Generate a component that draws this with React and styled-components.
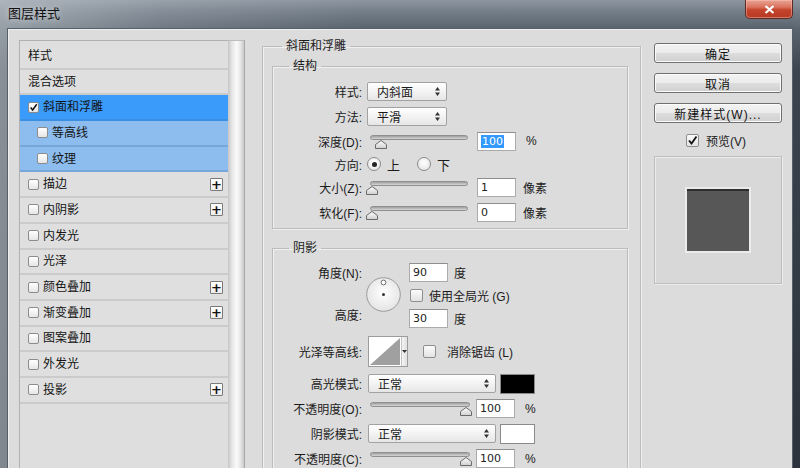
import React from 'react'
import styled, { createGlobalStyle } from 'styled-components'

const GlobalStyle = createGlobalStyle`
	html, body {
		margin: 0;
		padding: 0;
		background: #2a3039;
	}
	body {
		font-family: 'Liberation Sans', 'Noto Sans CJK SC', sans-serif;
		font-size: 12px;
		color: #1b1b1b;
	}
	* {
		box-sizing: border-box;
	}
`

const layers = [
	{ label: '样式', header: true },
	{ label: '混合选项', header: true },
	{ label: '斜面和浮雕', checked: true, state: 'sel' },
	{ label: '等高线', sub: true, state: 'sub' },
	{ label: '纹理', sub: true, state: 'sub' },
	{ label: '描边', plus: true },
	{ label: '内阴影', plus: true },
	{ label: '内发光' },
	{ label: '光泽' },
	{ label: '颜色叠加', plus: true },
	{ label: '渐变叠加', plus: true },
	{ label: '图案叠加' },
	{ label: '外发光' },
	{ label: '投影', plus: true },
]

const Arrows = () => (
	<svg width='5' height='9' viewBox='0 0 5 9'>
		<path d='M2.5 0 L5 3.5 L0 3.5 Z M2.5 9 L5 5.5 L0 5.5 Z' fill='#333' />
	</svg>
)

const Tick = () => (
	<svg width='11' height='11' viewBox='0 0 11 11'>
		<path d='M2 5.5 L4.5 8.5 L9.5 1.5' fill='none' stroke='#111' strokeWidth='1.8' />
	</svg>
)

const Slider = ({ width, value }) => (
	<SliderWrap $w={width}>
		<Track />
		<Thumb viewBox='0 0 12 9' style={{ left: value * (width - 6) - 4 }}>
			<defs>
				<linearGradient id='tg' x1='0' y1='0' x2='0' y2='1'>
					<stop offset='0' stopColor='#ffffff' />
					<stop offset='1' stopColor='#cfcfcf' />
				</linearGradient>
			</defs>
			<path d='M0.5 8.5 L0.5 4.5 L6 0.5 L11.5 4.5 L11.5 8.5 Z' fill='url(#tg)' stroke='#6a6a6a' />
		</Thumb>
	</SliderWrap>
)

const Dial = () => (
	<DialSvg width='35' height='35' viewBox='0 0 35 35'>
		<defs>
			<radialGradient id='dg' cx='0.5' cy='0.45' r='0.6'>
				<stop offset='0' stopColor='#ffffff' />
				<stop offset='1' stopColor='#e2e2e2' />
			</radialGradient>
		</defs>
		<circle cx='17.5' cy='17.5' r='16.8' fill='url(#dg)' stroke='#9a9a9a' />
		<circle cx='17.5' cy='5.5' r='2.4' fill='#fff' stroke='#6e6e6e' />
		<circle cx='17.5' cy='17.5' r='1.5' fill='#333' />
	</DialSvg>
)

const App = () => {
	return (
		<Frame>
			<GlobalStyle />
			<TitleBar>
				<Title>图层样式</Title>
				<CloseBtn>
					<svg width='11' height='9' viewBox='0 0 11 9'>
						<path d='M1.5 1 L9.5 8 M9.5 1 L1.5 8' stroke='#fff' strokeWidth='2.2' />
					</svg>
				</CloseBtn>
			</TitleBar>
			<Body>
				<Sidebar>
					<List>
						{layers.map((l) => (
							<Row key={l.label} $state={l.state} $sub={l.sub}>
								{!l.header && <Check>{l.checked && <Tick />}</Check>}
								<RowText>{l.label}</RowText>
								{l.plus && <Plus>+</Plus>}
							</Row>
						))}
					</List>
					<Scroll />
				</Sidebar>

				<Main>
					<Group>
						<Legend $ml={19}>斜面和浮雕</Legend>
						<Inner>
							<Group $mt={7}>
								<Legend $ml={16}>结构</Legend>
								<Section $pt={6} $pb={3}>
									<FormRow $h={25}>
										<Label>样式:</Label>
										<Select $w={80}>
											<span>内斜面</span>
											<Arrows />
										</Select>
									</FormRow>
									<FormRow $h={25}>
										<Label>方法:</Label>
										<Select $w={80}>
											<span>平滑</span>
											<Arrows />
										</Select>
									</FormRow>
									<FormRow $h={24}>
										<Label>深度(D):</Label>
										<Slider width={98} value={0.1} />
										<NumInput>
											<Selected>100</Selected>
										</NumInput>
										<Unit $ml={5}>%</Unit>
									</FormRow>
									<FormRow $h={22}>
										<Label>方向:</Label>
										<Radio $on $ml={0} />
										<RadioText>上</RadioText>
										<Radio $ml={12} />
										<RadioText>下</RadioText>
									</FormRow>
									<FormRow $h={24}>
										<Label>大小(Z):</Label>
										<Slider width={98} value={0} />
										<NumInput>1</NumInput>
										<Unit $ml={2}>像素</Unit>
									</FormRow>
									<FormRow $h={26}>
										<Label>软化(F):</Label>
										<Slider width={98} value={0} />
										<NumInput>0</NumInput>
										<Unit $ml={2}>像素</Unit>
									</FormRow>
								</Section>
							</Group>

							<Group $mt={13}>
								<Legend $ml={16}>阴影</Legend>
								<Section $pt={7} $pb={0}>
									<AngleBlock>
										<AngleLabels>
											<Label $h={20}>角度(N):</Label>
											<Label $h={20}>高度:</Label>
										</AngleLabels>
										<Dial />
										<AngleFields>
											<FieldLine>
												<NumInput>90</NumInput>
												<Unit $ml={6}>度</Unit>
											</FieldLine>
											<FieldLine $h={26}>
												<Box $ml={1} />
												<BoxText>使用全局光 (G)</BoxText>
											</FieldLine>
											<FieldLine>
												<NumInput>30</NumInput>
												<Unit $ml={6}>度</Unit>
											</FieldLine>
										</AngleFields>
									</AngleBlock>

									<FormRow $h={31} $mt={8}>
										<Label>光泽等高线:</Label>
										<Contour>
											<ContourArt viewBox='0 0 33 29' preserveAspectRatio='none'>
												<path d='M1 28 L32 1 L32 28 Z' fill='#a0a0a0' />
											</ContourArt>
											<ContourDrop>
												<svg width='5' height='3' viewBox='0 0 5 3'>
													<path d='M0 0 L5 0 L2.5 3 Z' fill='#333' />
												</svg>
											</ContourDrop>
										</Contour>
										<Box $ml={10} />
										<BoxText>消除锯齿 (L)</BoxText>
									</FormRow>

									<FormRow $h={25} $mt={4}>
										<Label>高光模式:</Label>
										<Select $w={128} $ml={1}>
											<span>正常</span>
											<Arrows />
										</Select>
										<Swatch $c='#000' />
									</FormRow>
									<FormRow $h={25}>
										<Label>不透明度(O):</Label>
										<Slider width={100} value={1} />
										<NumInput $ml={-3}>100</NumInput>
										<Unit $ml={5}>%</Unit>
									</FormRow>
									<FormRow $h={25}>
										<Label>阴影模式:</Label>
										<Select $w={128} $ml={1}>
											<span>正常</span>
											<Arrows />
										</Select>
										<Swatch $c='#fff' />
									</FormRow>
									<FormRow $h={25}>
										<Label>不透明度(C):</Label>
										<Slider width={100} value={1} />
										<NumInput $ml={-3}>100</NumInput>
										<Unit $ml={5}>%</Unit>
									</FormRow>
								</Section>
							</Group>
						</Inner>
					</Group>
				</Main>

				<Side>
					<Btn>确定</Btn>
					<Btn>取消</Btn>
					<Btn>新建样式(W)...</Btn>
					<PreviewCheck>
						<Box>
							<Tick />
						</Box>
						<span>预览(V)</span>
					</PreviewCheck>
					<Preview>
						<Square />
					</Preview>
				</Side>
			</Body>
		</Frame>
	)
}

const Frame = styled.div`
	width: 800px;
	height: 468px;
	overflow: hidden;
	display: flex;
	flex-direction: column;
	padding: 0 7px;
	background:
		linear-gradient(to right, rgba(200, 206, 212, 0.55) 0, rgba(200, 206, 212, 0.2) 20%, rgba(200, 206, 212, 0) 45%),
		linear-gradient(to bottom, #8d96a0 0, #737d88 12px, #5b6570 28px, #3b444f 70px, #2b323b 100%);
`

const TitleBar = styled.div`
	height: 28px;
	flex: none;
	display: flex;
	align-items: flex-start;
`

const Title = styled.div`
	padding: 6px 0 0 1px;
	font-size: 13px;
	line-height: 16px;
	color: #101010;
	text-shadow: 0 0 6px rgba(255, 255, 255, 0.7);
`

const CloseBtn = styled.div`
	margin-left: auto;
	width: 48px;
	height: 19px;
	display: flex;
	align-items: center;
	justify-content: center;
	border: 1px solid #5d2a22;
	border-top: none;
	border-radius: 0 0 5px 5px;
	background: linear-gradient(#eaa595 0, #d9715d 40%, #c4432b 55%, #b73a24 100%);
	box-shadow: inset 0 0 0 1px rgba(255, 200, 190, 0.45);
`

const Body = styled.div`
	flex: 1;
	min-height: 0;
	display: flex;
	align-items: stretch;
	background: #dcdcdc;
	border: 1px solid #55606b;
	border-bottom: none;
	box-shadow: inset 1px 1px 0 #eeeeee;
	padding: 11px 10px 0 11px;
`

const Sidebar = styled.div`
	flex: none;
	display: flex;
`

const List = styled.div`
	width: 209px;
	padding-top: 3px;
	background: #dedede;
	border-top: 1px solid #b0b0b0;
	border-left: 1px solid #b0b0b0;
`

const Row = styled.div`
	height: 25.7px;
	display: flex;
	align-items: center;
	gap: 4px;
	padding: 0 5px 0 ${(p) => (p.$sub ? 17 : 8)}px;
	background: ${(p) => (p.$state === 'sel' ? '#3a9bfa' : p.$state === 'sub' ? '#8dbdee' : '#dfdfdf')};
	border-bottom: 2px solid ${(p) => (p.$state ? 'rgba(60, 110, 170, 0.28)' : '#cbcbcb')};
`

const RowText = styled.span`
	flex: 1;
	font-size: 12px;
	line-height: 14px;
	color: #141414;
`

const Check = styled.span`
	width: 11px;
	height: 11px;
	flex: none;
	display: flex;
	align-items: center;
	justify-content: center;
	border: 1px solid #8c8c8c;
	border-radius: 2px;
	background: linear-gradient(#ffffff, #e6e6e6);
`

const Plus = styled.span`
	width: 13px;
	height: 13px;
	flex: none;
	display: flex;
	align-items: center;
	justify-content: center;
	border: 1px solid #7a7a7a;
	border-radius: 1px;
	background: linear-gradient(#ffffff, #ececec);
	font-family: 'DejaVu Sans', sans-serif;
	font-weight: bold;
	font-size: 13px;
	line-height: 1;
	color: #111;
`

const Scroll = styled.div`
	width: 17px;
	border-top: 1px solid #bdbdbd;
	border-right: 1px solid #a8a8a8;
	background: linear-gradient(to right, #c6c6c6 0, #e6e6e6 25%, #fafafa 55%, #e4e4e4 80%, #c9c9c9 100%);
`

const Main = styled.div`
	width: 379px;
	flex: none;
	margin-left: 17px;
`

const Group = styled.fieldset`
	margin: ${(p) => p.$mt || 0}px 0 0;
	padding: 0;
	min-width: 0;
	border: 1px solid #bcbcbc;
	box-shadow: inset 1px 1px 0 #f0f0f0, 1px 1px 0 #f0f0f0;
`

const Legend = styled.legend`
	margin-left: ${(p) => p.$ml}px;
	padding: 0 4px;
	font-size: 12px;
	line-height: 13px;
	color: #1b1b1b;
`

const Inner = styled.div`
	padding: 0 12px 40px 9px;
`

const Section = styled.div`
	padding: ${(p) => p.$pt}px 0 ${(p) => p.$pb}px 5px;
`

const FormRow = styled.div`
	height: ${(p) => p.$h}px;
	margin-top: ${(p) => p.$mt || 0}px;
	display: flex;
	align-items: center;
	gap: 5px;
`

const Label = styled.div`
	width: 84px;
	height: ${(p) => (p.$h ? `${p.$h}px` : 'auto')};
	flex: none;
	display: flex;
	align-items: center;
	justify-content: flex-end;
	white-space: nowrap;
	font-size: 12px;
`

const Select = styled.div`
	width: ${(p) => p.$w}px;
	height: 19px;
	margin-left: ${(p) => p.$ml || 0}px;
	flex: none;
	display: flex;
	align-items: center;
	justify-content: space-between;
	padding: 0 6px 0 9px;
	border: 1px solid #a2a2a2;
	border-radius: 2px;
	background: linear-gradient(#ffffff 0, #f3f3f3 50%, #e6e6e6 100%);
`

const SliderWrap = styled.div`
	position: relative;
	width: ${(p) => p.$w}px;
	height: 19px;
	flex: none;
	margin: 0 4px 0 3px;
`

const Track = styled.div`
	position: absolute;
	left: 0;
	right: 0;
	top: 3px;
	height: 5px;
	border: 1px solid #8f8f8f;
	border-radius: 3px;
	background: linear-gradient(#9e9e9e, #d6d6d6);
`

const Thumb = styled.svg`
	position: absolute;
	top: 8px;
	width: 12px;
	height: 9px;
`

const NumInput = styled.div`
	width: 39px;
	height: 19px;
	flex: none;
	margin-left: ${(p) => p.$ml || 0}px;
	display: flex;
	align-items: center;
	padding: 0 3px;
	background: #fff;
	border: 1px solid #ababab;
	border-top-color: #8e8e8e;
	font-family: 'DejaVu Sans', sans-serif;
	font-size: 11px;
	color: #222;
`

const Selected = styled.span`
	background: #3399ff;
	color: #fff;
	line-height: 13px;
	padding: 0 1px;
`

const Unit = styled.span`
	margin-left: ${(p) => p.$ml || 0}px;
	font-size: 12px;
`

const Radio = styled.span`
	width: 14px;
	height: 14px;
	flex: none;
	margin-left: ${(p) => p.$ml}px;
	border-radius: 50%;
	border: 1px solid #8a8a8a;
	background: radial-gradient(circle at 50% 40%, #ffffff, #e0e0e0);
	display: flex;
	align-items: center;
	justify-content: center;

	&::after {
		content: '';
		width: 5px;
		height: 5px;
		border-radius: 50%;
		background: ${(p) => (p.$on ? '#222' : 'transparent')};
	}
`

const RadioText = styled.span`
	font-size: 13px;
	margin-left: 1px;
`

const AngleBlock = styled.div`
	display: flex;
	height: 66px;
`

const AngleLabels = styled.div`
	width: 84px;
	display: flex;
	flex-direction: column;
	justify-content: space-between;
	padding-bottom: 4px;
`

const DialSvg = styled.svg`
	flex: none;
	margin: 15px 8px 0 4px;
`

const AngleFields = styled.div`
	display: flex;
	flex-direction: column;
`

const FieldLine = styled.div`
	height: ${(p) => p.$h || 20}px;
	display: flex;
	align-items: center;
`

const Box = styled.span`
	width: 13px;
	height: 13px;
	flex: none;
	margin-left: ${(p) => p.$ml || 0}px;
	display: flex;
	align-items: center;
	justify-content: center;
	border: 1px solid #8e8e8e;
	border-radius: 2px;
	background: linear-gradient(#fbfbfb, #e3e3e3);
`

const BoxText = styled.span`
	margin-left: 6px;
	font-size: 12px;
	white-space: nowrap;
`

const Contour = styled.div`
	width: 40px;
	height: 31px;
	flex: none;
	margin-left: 1px;
	display: flex;
	border: 1px solid #9c9c9c;
	background: #fff;
`

const ContourArt = styled.svg`
	width: 33px;
	height: 29px;
`

const ContourDrop = styled.div`
	flex: 1;
	display: flex;
	align-items: center;
	justify-content: center;
	border-left: 1px solid #c2c2c2;
	background: linear-gradient(to right, #f4f4f4, #e0e0e0);
`

const Swatch = styled.div`
	width: 35px;
	height: 20px;
	flex: none;
	margin-left: -1px;
	background: ${(p) => p.$c};
	border: 1px solid #8a8a8a;
`

const Side = styled.div`
	width: 128px;
	flex: none;
	margin-left: 13px;
	padding-top: 3px;
	display: flex;
	flex-direction: column;
	gap: 10px;
`

const Btn = styled.div`
	height: 20px;
	display: flex;
	align-items: center;
	justify-content: center;
	border: 1px solid #707070;
	border-radius: 3px;
	background: linear-gradient(#f3f3f3 0, #ebebeb 50%, #dddddd 51%, #d0d0d0 100%);
	box-shadow: inset 0 0 0 1px #fbfbfb;
	font-size: 12px;
	letter-spacing: 1px;
	color: #111;
`

const PreviewCheck = styled.div`
	height: 18px;
	margin-top: -2px;
	display: flex;
	align-items: center;
	justify-content: center;
	gap: 7px;
	font-size: 12px;
	padding-right: 4px;
`

const Preview = styled.div`
	height: 128px;
	margin-top: -3px;
	display: flex;
	align-items: center;
	justify-content: center;
	background: #d8d8d8;
	border: 1px solid #bdbdbd;
	box-shadow: inset 1px 1px 0 #ececec, 1px 1px 0 #ececec;
`

const Square = styled.div`
	width: 62px;
	height: 62px;
	background: #575757;
	border-top: 2px solid #2e2e2e;
	box-shadow: 0 0 0 2px #ebebeb;
`

export default App
